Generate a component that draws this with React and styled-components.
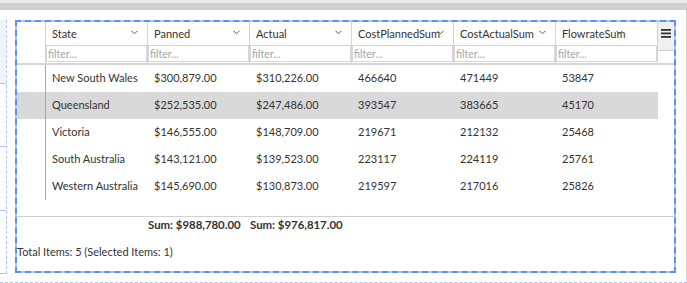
import React from "react";
import styled, { createGlobalStyle } from "styled-components";

const columns = [
  { key: "state", title: "State" },
  { key: "planned", title: "Panned" },
  { key: "actual", title: "Actual" },
  { key: "costPlanned", title: "CostPlannedSum" },
  { key: "costActual", title: "CostActualSum" },
  { key: "flowrate", title: "FlowrateSum", chevronRight: 34 },
];

const rows = [
  { id: 1, state: "New South Wales", planned: "$300,879.00", actual: "$310,226.00", costPlanned: "466640", costActual: "471449", flowrate: "53847" },
  { id: 2, state: "Queensland", planned: "$252,535.00", actual: "$247,486.00", costPlanned: "393547", costActual: "383665", flowrate: "45170", selected: true },
  { id: 3, state: "Victoria", planned: "$146,555.00", actual: "$148,709.00", costPlanned: "219671", costActual: "212132", flowrate: "25468" },
  { id: 4, state: "South Australia", planned: "$143,121.00", actual: "$139,523.00", costPlanned: "223117", costActual: "224119", flowrate: "25761" },
  { id: 5, state: "Western Australia", planned: "$145,690.00", actual: "$130,873.00", costPlanned: "219597", costActual: "217016", flowrate: "25826" },
];

const Chevron = () => (
  <svg width="7" height="5" viewBox="0 0 7 5">
    <polyline points="0.5,0.8 3.5,3.8 6.5,0.8" fill="none" stroke="#555" strokeWidth="1" />
  </svg>
);

const MenuIcon = () => (
  <svg width="10" height="9" viewBox="0 0 10 9">
    <rect x="0" y="0" width="10" height="1.8" fill="#333" />
    <rect x="0" y="3.5" width="10" height="1.8" fill="#333" />
    <rect x="0" y="7" width="10" height="1.8" fill="#333" />
  </svg>
);

const App = () => {
  return (
    <Page>
      <GlobalStyle />
      <TopBar />
      <Stage>
        <LeftRail>
          <RailSegment $filled />
          <RailSegment />
          <RailSegment />
          <RailSegment />
        </LeftRail>

        <GridBox>
          <Header>
            <Corner />
            {columns.map((col) => (
              <HeaderColumn key={col.key}>
                <TitleCell>
                  {col.title}
                  <ChevronSlot $right={col.chevronRight || 9}>
                    <Chevron />
                  </ChevronSlot>
                </TitleCell>
                <FilterCell>
                  <FilterInput placeholder="filter..." />
                </FilterCell>
              </HeaderColumn>
            ))}
            <MenuColumn>
              <MenuButton>
                <MenuIcon />
              </MenuButton>
            </MenuColumn>
          </Header>

          <Body>
            {rows.map((row) => (
              <Row key={row.id} $selected={row.selected}>
                <RowSelector />
                {columns.map((col) => (
                  <Cell key={col.key}>{row[col.key]}</Cell>
                ))}
              </Row>
            ))}
          </Body>

          <Footer>
            <SumRow>
              <Corner $plain />
              <SumCell />
              <SumCell>Sum: $988,780.00</SumCell>
              <SumCell>Sum: $976,817.00</SumCell>
            </SumRow>
            <Status>Total Items: 5 (Selected Items: 1)</Status>
          </Footer>
        </GridBox>
      </Stage>
    </Page>
  );
};

const GlobalStyle = createGlobalStyle`
  html, body {
    margin: 0;
    padding: 0;
    background: #fff;
  }
  body {
    font-family: Lato, "Liberation Sans", sans-serif;
    color: #333;
  }
  * {
    box-sizing: border-box;
  }
`;

const Page = styled.div`
  width: 687px;
  height: 283px;
  display: flex;
  flex-direction: column;
  overflow: hidden;
`;

const TopBar = styled.div`
  height: 10px;
  border-top: 3px solid #ebebeb;
  background: #d0d0d0;
  flex-shrink: 0;
`;

const Stage = styled.div`
  flex: 1;
  display: flex;
  align-items: flex-start;
  padding-top: 10px;
  border-right: 1px solid #cfcfcf;
  border-bottom: 1px dashed #a9c6f5;
`;

const LeftRail = styled.div`
  width: 7px;
  height: 254px;
  display: flex;
  flex-direction: column;
  border-right: 1px dashed #a9c6f5;
`;

const RailSegment = styled.div`
  flex: 1;
  background: ${(p) => (p.$filled ? "#eef3fd" : "transparent")};
  border-bottom: 1px dashed #a9c6f5;
`;

const GridBox = styled.div`
  margin-left: 8px;
  width: 661px;
  height: 253px;
  display: flex;
  flex-direction: column;
  border: 2px dashed #5f8ff0;
  background: linear-gradient(#fff, #fff) padding-box, #a9c6f5 border-box;
  font-size: 11px;
`;

const Header = styled.div`
  display: flex;
  height: 43px;
  border-bottom: 2px solid #d6d6d6;
  flex-shrink: 0;
`;

const Corner = styled.div`
  width: 29px;
  flex-shrink: 0;
  border-right: ${(p) => (p.$plain ? "none" : "1px solid #d4d4d4")};
`;

const HeaderColumn = styled.div`
  width: 102px;
  display: flex;
  flex-direction: column;
  border-right: 1px solid #d4d4d4;
`;

const TitleCell = styled.div`
  position: relative;
  height: 24px;
  line-height: 23px;
  padding-left: 6px;
  border-bottom: 1px solid #d4d4d4;
  white-space: nowrap;
  color: #333;
`;

const ChevronSlot = styled.span`
  position: absolute;
  top: 8px;
  right: ${(p) => p.$right}px;
  display: flex;
`;

const FilterCell = styled.div`
  flex: 1;
  display: flex;
`;

const FilterInput = styled.input`
  width: 100%;
  height: 16px;
  margin: 0;
  padding: 0 1px;
  border: 1px solid #d8d8d8;
  border-top: none;
  font-family: inherit;
  font-size: 10.5px;
  color: #333;
  outline: none;

  &::placeholder {
    color: #a3a3a3;
  }
`;

const MenuColumn = styled.div`
  flex: 1;
`;

const MenuButton = styled.div`
  height: 29px;
  display: flex;
  justify-content: center;
  padding-top: 7px;
  background: #f0f0f0;
  border-bottom: 1px solid #cfcfcf;
`;

const Body = styled.div`
  flex: 1;
  display: flex;
  flex-direction: column;
`;

const Row = styled.div`
  display: flex;
  width: 641px;
  height: 27px;
  background: ${(p) => (p.$selected ? "#d9d9d9" : "transparent")};
`;

const RowSelector = styled.div`
  width: 29px;
  border-right: 1px solid #a8a8a8;
`;

const Cell = styled.div`
  width: 102px;
  padding-left: 6px;
  line-height: 26px;
  white-space: nowrap;
  color: #333;
`;

const Footer = styled.div`
  height: 55px;
  flex-shrink: 0;
  border-top: 1px solid #d0d0d0;
  display: flex;
  flex-direction: column;
`;

const SumRow = styled.div`
  display: flex;
  height: 16px;
  line-height: 16px;
  margin-bottom: 11px;
`;

const SumCell = styled.div`
  width: 102px;
  font-size: 11.4px;
  font-weight: 700;
  white-space: nowrap;
  color: #333;
`;

const Status = styled.div`
  line-height: 16px;
  color: #333;
`;

export default App;
